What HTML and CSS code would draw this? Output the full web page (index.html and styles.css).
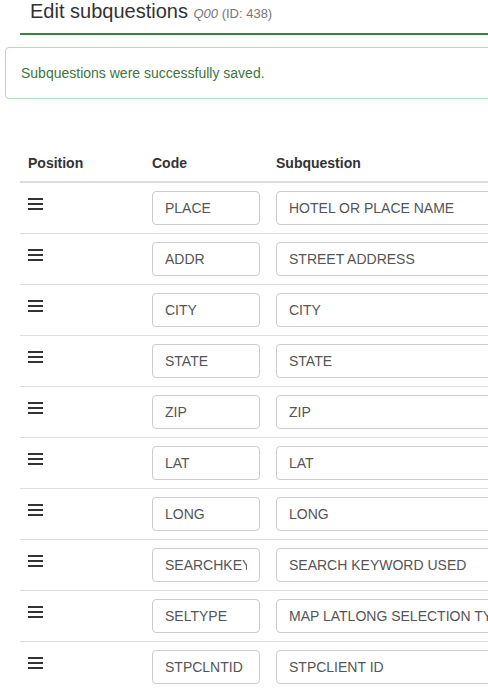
FILE: index.html
```html
<!DOCTYPE html>
<html lang="en">
<head>
<meta charset="utf-8">
<title>Edit subquestions</title>
<link rel="stylesheet" href="styles.css">
</head>
<body>
<div class="page-header">
  <h3 class="title">Edit subquestions <small><em>Q00</em> (ID: 438)</small></h3>
</div>
<div class="alert">Subquestions were successfully saved.</div>
<table class="subq-table">
  <thead>
    <tr><th class="col-pos">Position</th><th class="col-code">Code</th><th class="col-sub">Subquestion</th></tr>
  </thead>
  <tbody>
    <tr><td><span class="bars"><i></i><i></i><i></i></span></td><td><input class="field code" value="PLACE"></td><td><input class="field sub" value="HOTEL OR PLACE NAME"></td></tr>
    <tr><td><span class="bars"><i></i><i></i><i></i></span></td><td><input class="field code" value="ADDR"></td><td><input class="field sub" value="STREET ADDRESS"></td></tr>
    <tr><td><span class="bars"><i></i><i></i><i></i></span></td><td><input class="field code" value="CITY"></td><td><input class="field sub" value="CITY"></td></tr>
    <tr><td><span class="bars"><i></i><i></i><i></i></span></td><td><input class="field code" value="STATE"></td><td><input class="field sub" value="STATE"></td></tr>
    <tr><td><span class="bars"><i></i><i></i><i></i></span></td><td><input class="field code" value="ZIP"></td><td><input class="field sub" value="ZIP"></td></tr>
    <tr><td><span class="bars"><i></i><i></i><i></i></span></td><td><input class="field code" value="LAT"></td><td><input class="field sub" value="LAT"></td></tr>
    <tr><td><span class="bars"><i></i><i></i><i></i></span></td><td><input class="field code" value="LONG"></td><td><input class="field sub" value="LONG"></td></tr>
    <tr><td><span class="bars"><i></i><i></i><i></i></span></td><td><input class="field code" value="SEARCHKEYWORD"></td><td><input class="field sub" value="SEARCH KEYWORD USED"></td></tr>
    <tr><td><span class="bars"><i></i><i></i><i></i></span></td><td><input class="field code" value="SELTYPE"></td><td><input class="field sub" value="MAP LATLONG SELECTION TYPE"></td></tr>
    <tr><td><span class="bars"><i></i><i></i><i></i></span></td><td><input class="field code" value="STPCLNTID"></td><td><input class="field sub" value="STPCLIENT ID"></td></tr>
  </tbody>
</table>
</body>
</html>
```
FILE: styles.css
```css
html, body {
  margin: 0;
  padding: 0;
  overflow: hidden;
  background: #fff;
}
body {
  font-family: "Liberation Sans", Arial, sans-serif;
  font-size: 14px;
  line-height: 20px;
  color: #333;
  width: 800px;
}
.page-header {
  margin-left: 20px;
  padding-left: 10px;
  height: 33px;
  border-bottom: 2px solid #328637;
}
.title {
  margin: 0;
  font-size: 20px;
  font-weight: normal;
  line-height: 22px;
  color: #333;
}
.title small {
  font-size: 13px;
  color: #777;
}
.alert {
  margin: 12px 0 0 5px;
  padding: 15px;
  border: 1px solid #b2dcb2;
  border-radius: 4px;
  color: #3c763d;
  background: #fff;
}
.subq-table {
  margin: 46px 0 0 20px;
  border-collapse: collapse;
  width: 760px;
}
.subq-table th {
  text-align: left;
  font-weight: bold;
  padding: 8px;
  line-height: 20px;
  border-bottom: 2px solid #ddd;
}
.subq-table td {
  padding: 8px;
  vertical-align: top;
  border-top: 1px solid #ddd;
}
.subq-table tbody tr:first-child td {
  border-top: 0;
}
.col-pos { width: 108px; }
.col-code { width: 108px; }
.bars {
  display: flex;
  flex-direction: column;
  gap: 3px;
  width: 15px;
  padding-top: 7px;
}
.bars i {
  display: block;
  height: 2px;
  background: #333;
}
.field {
  display: block;
  box-sizing: border-box;
  height: 34px;
  padding: 6px 12px;
  font-family: "Liberation Sans", Arial, sans-serif;
  font-size: 14px;
  color: #555;
  border: 1px solid #ccc;
  border-radius: 4px;
  background: #fff;
  margin: 0;
}
.field.code { width: 108px; }
.field.sub { width: 460px; }
```
